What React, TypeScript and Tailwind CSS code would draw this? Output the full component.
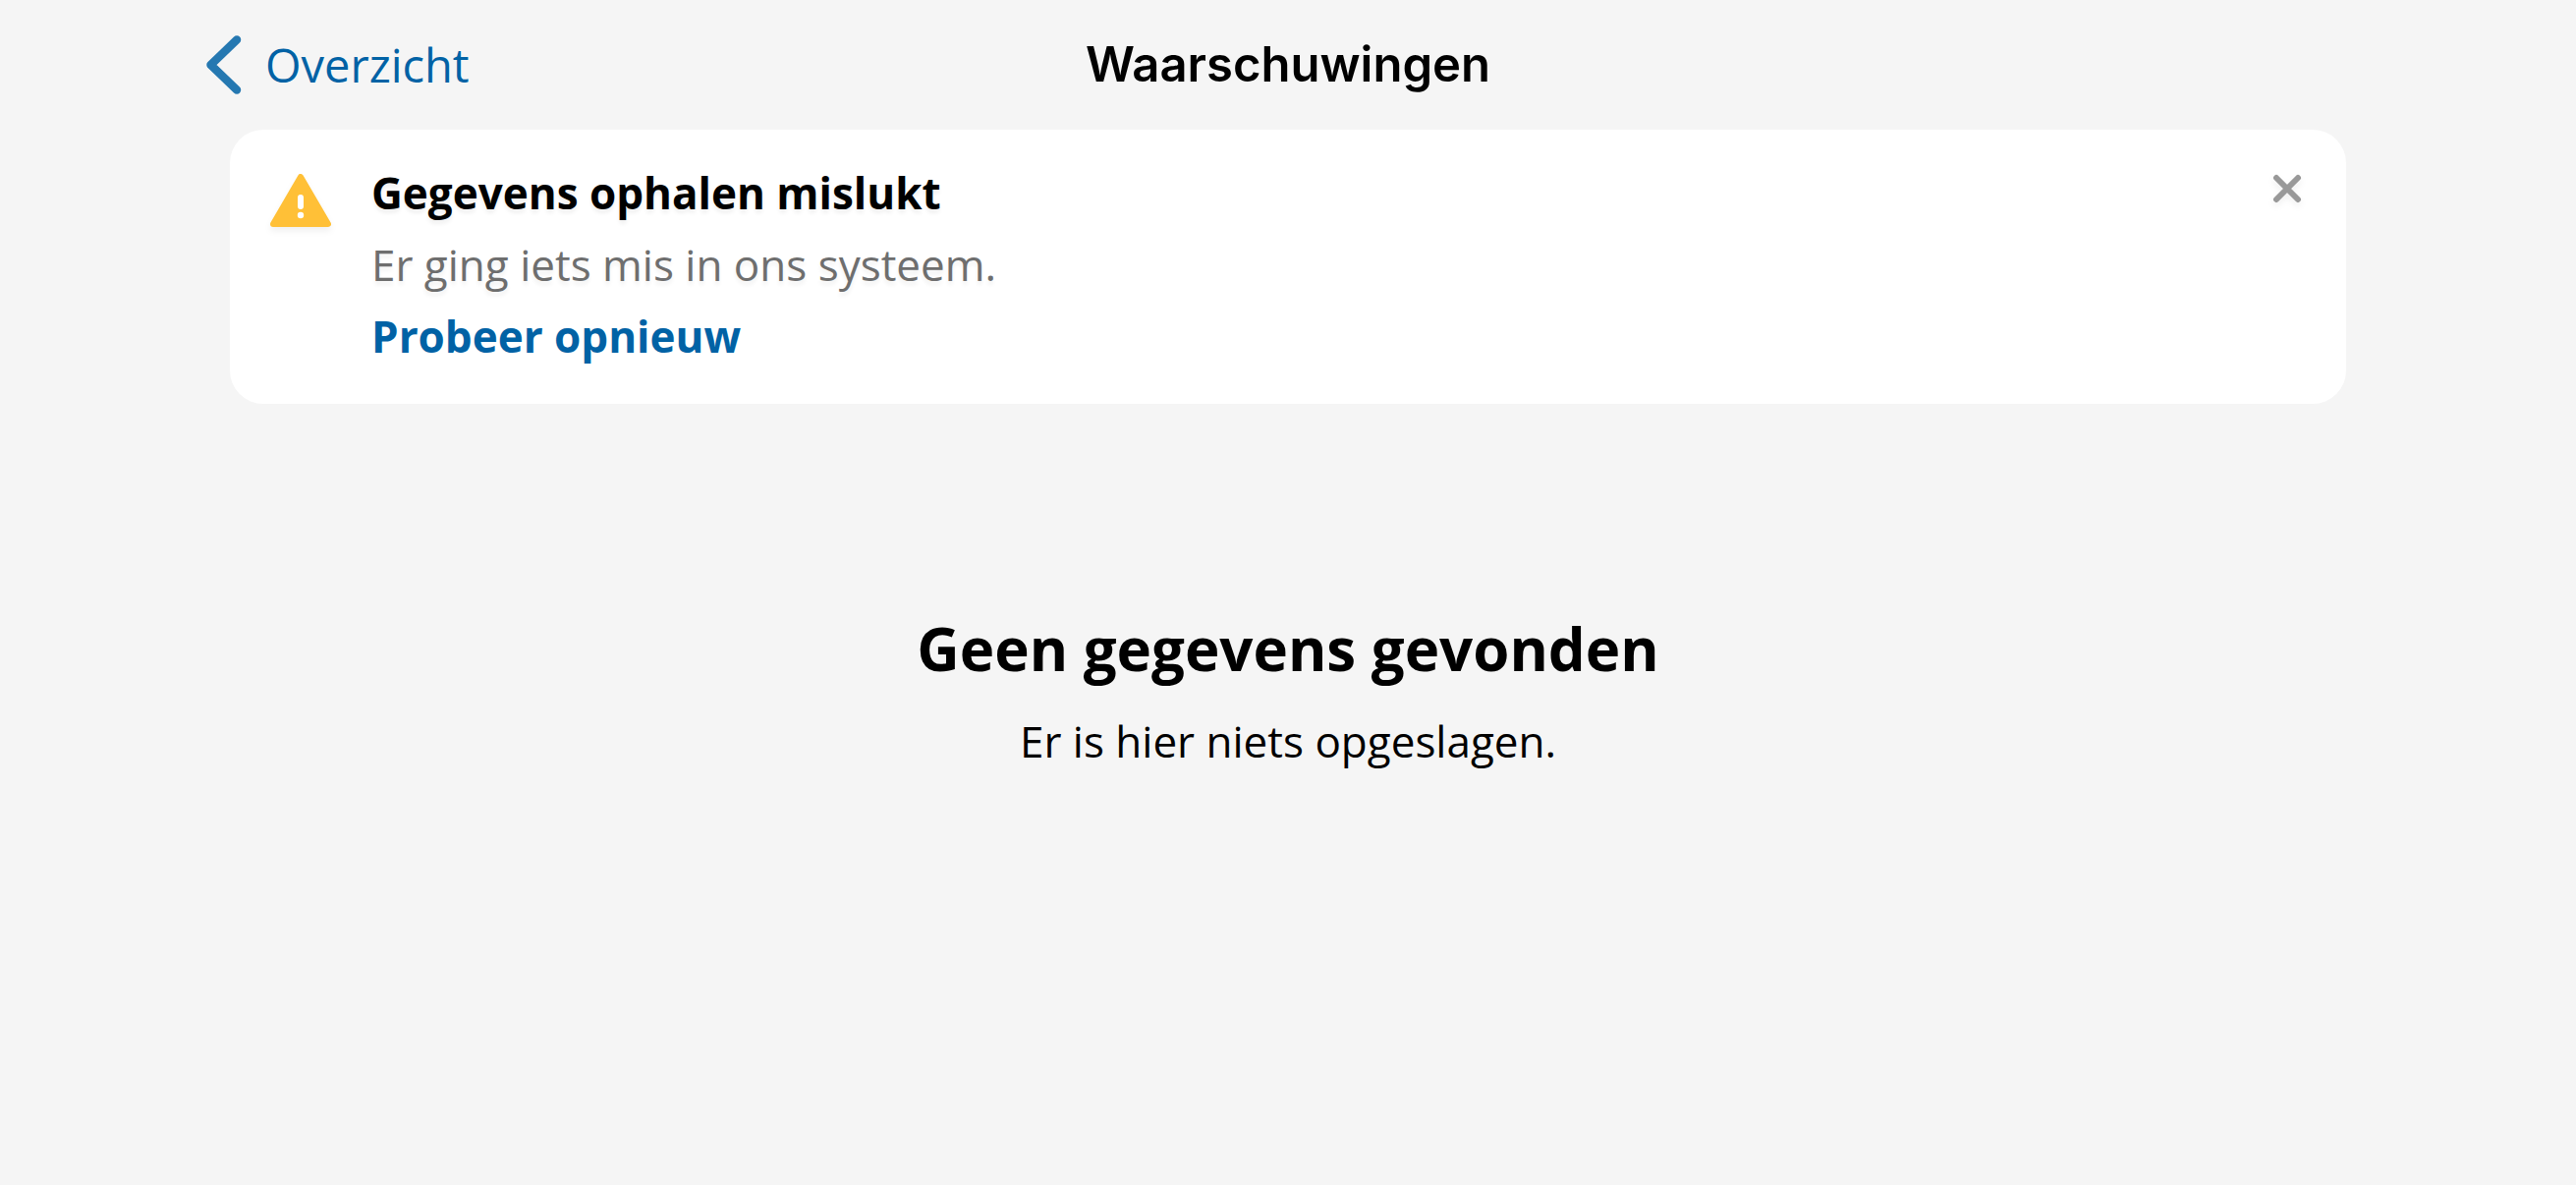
export default function App() {
  return (
    <div className="min-h-screen bg-[#f5f5f5] text-black font-['Open_Sans',sans-serif]">
      <header className="grid h-[132px] grid-cols-[1fr_auto_1fr] items-center px-[208px]">
        <button type="button" className="flex items-center gap-[22px] justify-self-start text-[#0162a5] text-[47px]">
          <svg className="h-[62px] w-[40px]" viewBox="0 0 40 62" fill="none" stroke="#2578b1" strokeWidth="8.500" strokeLinecap="round" strokeLinejoin="round" aria-hidden="true"><path d="M33 5.500 6.500 31 33 56.500" /></svg>
          <span>Overzicht</span>
        </button>
        <h1 className="font-['Inter',sans-serif] text-[49px] font-semibold">Waarschuwingen</h1>
      </header>
      <main>
        <section className="mx-[234px] flex items-start rounded-[34px] bg-white pt-[28px] pb-8 pl-10 pr-[45px]">
          <svg className="mt-4 h-[56px] w-[64px] drop-shadow-[0_4px_3px_rgba(0,0,0,0.06)]" viewBox="0 0 64 56" aria-hidden="true"><path d="M32 4 60 52H4Z" fill="#ffc037" stroke="#ffc037" strokeWidth="6" strokeLinejoin="round" /><path d="M32 25v9" stroke="white" strokeWidth="6" strokeLinecap="round" /><circle cx="32" cy="43" r="3.200" fill="white" /></svg>
          <div className="ml-10 flex-1 text-[44px] leading-[73px] text-shadow-[0_4px_4px_rgba(0,0,0,0.06)]">
            <h2 className="font-bold">Gegevens ophalen mislukt</h2>
            <p className="text-[#6e6e6e]">Er ging iets mis in ons systeem.</p>
            <button type="button" className="block font-bold text-[#0162a5]">Probeer opnieuw</button>
          </div>
          <button type="button" aria-label="Sluiten" className="mt-[17px]"><svg className="h-[30px] w-[30px] drop-shadow-[0_4px_3px_rgba(0,0,0,0.06)]" viewBox="0 0 30 30" stroke="#999" strokeWidth="6" strokeLinecap="round" aria-hidden="true"><path d="m4 4 22 22M26 4 4 26" /></svg></button>
        </section>
        <section className="mt-[199px] text-center">
          <h2 className="text-[60px] leading-[100px] font-bold">Geen gegevens gevonden</h2>
          <p className="mt-2 text-[44px] leading-[73px]">Er is hier niets opgeslagen.</p>
        </section>
      </main>
    </div>
  );
}
